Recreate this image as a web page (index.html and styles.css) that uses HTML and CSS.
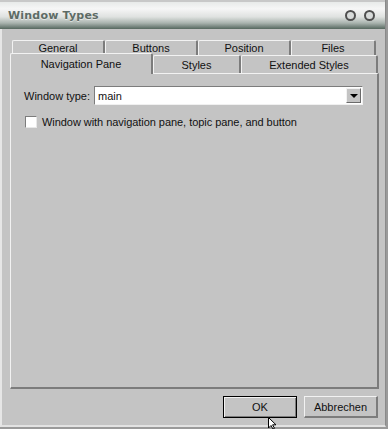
FILE: index.html
```html
<!DOCTYPE html>
<html lang="en">

<head>
	<meta charset="UTF-8">
	<meta name="viewport" content="width=device-width, initial-scale=1.0">
	<title>Window Types</title>
	<link rel="stylesheet" href="styles.css">
</head>

<body>
	<div class="window">
		<header class="titlebar">
			<h1>Window Types</h1>
			<div class="controls">
				<span class="ring"></span>
				<span class="ring"></span>
			</div>
		</header>

		<div class="tabs">
			<div class="tab-row back">
				<div class="tab">General</div>
				<div class="tab">Buttons</div>
				<div class="tab">Position</div>
				<div class="tab last">Files</div>
			</div>
			<div class="tab-row front">
				<div class="tab active">Navigation Pane</div>
				<div class="tab styles">Styles</div>
				<div class="tab extended">Extended Styles</div>
			</div>
		</div>

		<main class="panel">
			<div class="field">
				<label for="type">Window type:</label>
				<div class="combo">
					<span class="value">main</span>
					<span class="drop"><i></i></span>
				</div>
			</div>
			<div class="check">
				<span class="box"></span>
				<span>Window with navigation pane, topic pane, and button</span>
			</div>
		</main>

		<footer class="actions">
			<button class="btn default">OK</button>
			<button class="btn">Abbrechen</button>
		</footer>
	</div>

	<svg class="cursor" width="12" height="12" viewBox="0 0 12 12">
		<path d="M0.5 0.5 L0.5 11 L3 8.5 L5 12 L6.5 11.3 L4.6 7.8 L8 7.8 Z" fill="#fff" stroke="#000" stroke-width="1"/>
	</svg>
</body>

</html>
```

FILE: styles.css
```css
* {
	box-sizing: border-box;
}

body {
	margin: 0;
	background: #9a9a9a;
	font-family: "Liberation Sans", Arial, sans-serif;
	font-size: 11px;
	color: #111;
}

.window {
	width: 386px;
	height: 427px;
	background: #c4c4c4;
	border-left: 2px solid #e6e6e6;
	border-bottom: 2px solid #e2e2e2;
	border-right: 1px solid #8a8a8a;
	position: relative;
}

.titlebar {
	height: 29px;
	margin-left: -2px;
	display: flex;
	align-items: center;
	justify-content: space-between;
	padding: 0 10px 0 8px;
	border-top: 2px solid #c8c8c8;
	background: linear-gradient(#e8eae9 0%, #f6f6f6 25%, #dfe2e0 55%, #a9b3ae 78%, #56685f 100%);
}

.titlebar h1 {
	margin: 0;
	font-family: "DejaVu Sans", Verdana, sans-serif;
	font-size: 11px;
	font-weight: bold;
	letter-spacing: 0.2px;
	color: #5d6b65;
	text-shadow: 0 1px 0 rgba(255, 255, 255, 0.5);
}

.controls {
	display: flex;
	gap: 8px;
}

.ring {
	width: 11px;
	height: 11px;
	border-radius: 50%;
	border: 2.5px solid #4e4e4e;
	background: #d8dbda;
}

.tabs {
	margin-top: 11px;
}

.tab-row {
	display: flex;
	height: 16px;
}

.tab-row.back {
	padding-left: 10px;
	height: 15px;
}

.tab-row.back .tab {
	line-height: 14px;
}

.tab-row.front {
	padding-left: 8px;
	height: 18px;
	position: relative;
	z-index: 1;
}

.tab {
	width: 93px;
	height: 100%;
	text-align: center;
	line-height: 16px;
	border-top: 1px solid #f2f2f2;
	border-left: 1px solid #f2f2f2;
	border-right: 2px solid #7c7c7c;
	border-radius: 2px 2px 0 0;
	background: #c4c4c4;
}

.tab.last {
	width: 85px;
}

.tab.active {
	width: 143px;
	height: 21px;
	margin-top: -2px;
	line-height: 20px;
}

.tab.styles {
	width: 88px;
	line-height: 18px;
}

.tab.extended {
	width: 137px;
	line-height: 18px;
}

.panel {
	margin-left: 8px;
	width: 369px;
	height: 316px;
	border-top: 1px solid #f2f2f2;
	border-left: 1px solid #f2f2f2;
	border-right: 2px solid #7c7c7c;
	border-bottom: 2px solid #7c7c7c;
	padding: 12px 13px 0 13px;
}

.field {
	display: flex;
	align-items: center;
	gap: 4px;
}

.combo {
	width: 269px;
	height: 19px;
	display: flex;
	align-items: center;
	background: #fff;
	border-top: 1px solid #7c7c7c;
	border-left: 1px solid #7c7c7c;
	border-right: 1px solid #f0f0f0;
	border-bottom: 1px solid #f0f0f0;
	padding: 1px;
}

.value {
	flex: 1;
	padding-left: 2px;
}

.drop {
	width: 15px;
	height: 15px;
	background: #c4c4c4;
	border-top: 1px solid #f2f2f2;
	border-left: 1px solid #f2f2f2;
	border-right: 1px solid #6a6a6a;
	border-bottom: 1px solid #6a6a6a;
	display: flex;
	align-items: center;
	justify-content: center;
}

.drop i {
	width: 0;
	height: 0;
	border-left: 4px solid transparent;
	border-right: 4px solid transparent;
	border-top: 4px solid #000;
}

.check {
	display: flex;
	align-items: center;
	gap: 5px;
	margin-top: 11px;
	padding-left: 1px;
	letter-spacing: -0.05px;
}

.box {
	width: 12px;
	height: 12px;
	background: #fff;
	border-top: 1px solid #7c7c7c;
	border-left: 1px solid #7c7c7c;
	border-right: 1px solid #e8e8e8;
	border-bottom: 1px solid #e8e8e8;
}

.actions {
	display: flex;
	justify-content: flex-end;
	gap: 7px;
	padding: 7px 7px 0 0;
}

.btn {
	width: 74px;
	height: 22px;
	font-family: "Liberation Sans", Arial, sans-serif;
	font-size: 11px;
	color: #111;
	background: #c4c4c4;
	border-top: 1px solid #f2f2f2;
	border-left: 1px solid #f2f2f2;
	border-right: 2px solid #7c7c7c;
	border-bottom: 2px solid #7c7c7c;
	padding: 0;
}

.btn.default {
	outline: 1px solid #000;
	outline-offset: -1px;
	border-color: #000;
	box-shadow: inset 1px 1px 0 #f2f2f2, inset -1px -1px 0 #7c7c7c;
	border-width: 1px;
}

.cursor {
	position: absolute;
	left: 268px;
	top: 417px;
}
```
